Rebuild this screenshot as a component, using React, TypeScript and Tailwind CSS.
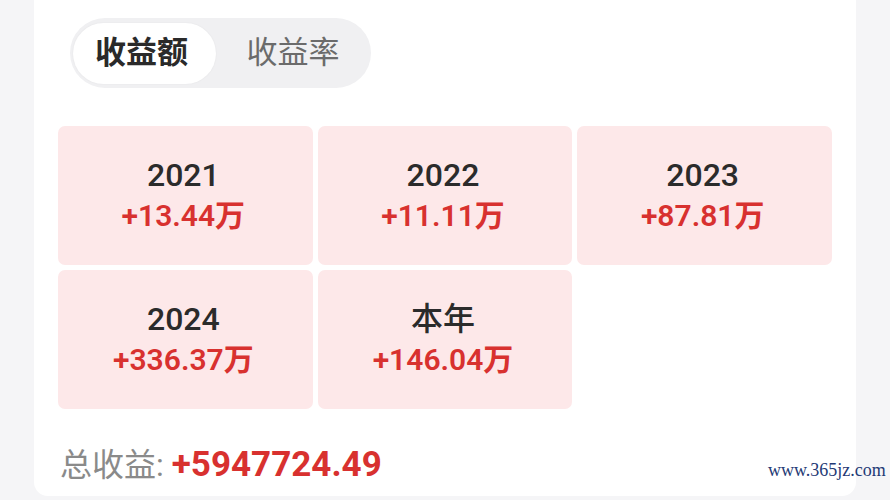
import React from "react";

const tiles = [
  { label: "2021", value: "+13.44万" },
  { label: "2022", value: "+11.11万" },
  { label: "2023", value: "+87.81万" },
  { label: "2024", value: "+336.37万" },
  { label: "本年", value: "+146.04万" },
];

const font = { fontFamily: 'Roboto, "Noto Sans CJK SC", sans-serif' };

export default function App() {
  return (
    <div className="w-[890px] h-[500px] bg-[#f5f5f7] overflow-hidden relative" style={font}>
      <div className="ml-[34px] w-[822px] h-[496px] bg-white rounded-b-[14px] pt-[18px] pl-[24px] pr-[24px]">
        <div className="ml-[12px] w-[301px] h-[70px] rounded-full bg-[#f0f0f2] flex items-center px-[3px]">
          <div className="w-[143px] h-[61px] rounded-full bg-white flex items-center justify-center text-[31px] font-bold text-[#2a2a2a] pr-[6px] shadow-[0_0_2px_rgba(0,0,0,0.06)]">
            收益额
          </div>
          <div className="flex-1 flex items-center justify-center text-[31px] text-[#6b6b6b] pl-[2px]">
            收益率
          </div>
        </div>
        <div className="mt-[38px] grid grid-cols-3 gap-[5px] w-[774px]">
          {tiles.map((t) => (
            <div
              key={t.label}
              className="h-[139px] rounded-[7px] bg-[#fde8e9] flex flex-col items-center justify-center"
            >
              <div className="text-[32px] leading-[40px] font-medium text-[#2b2b2b] mt-[-2px] mr-[4px]">{t.label}</div>
              <div className="text-[30px] leading-[36px] font-semibold text-[#d8312f] mt-[3px] mr-[4px]">{t.value}</div>
            </div>
          ))}
        </div>
        <div className="mt-[30px] flex items-center ml-[2px]">
          <span className="text-[32px] text-[#8a8a8a]">总收益:</span>
          <span className="ml-[8px] text-[35px] font-bold text-[#d8312f]">+5947724.49</span>
        </div>
      </div>
      <div
        className="absolute left-[768px] top-[457px] text-[18px] text-[#1f3a75]"
        style={{ fontFamily: '"Liberation Serif", serif' }}
      >
        www.365jz.com
      </div>
    </div>
  );
}
